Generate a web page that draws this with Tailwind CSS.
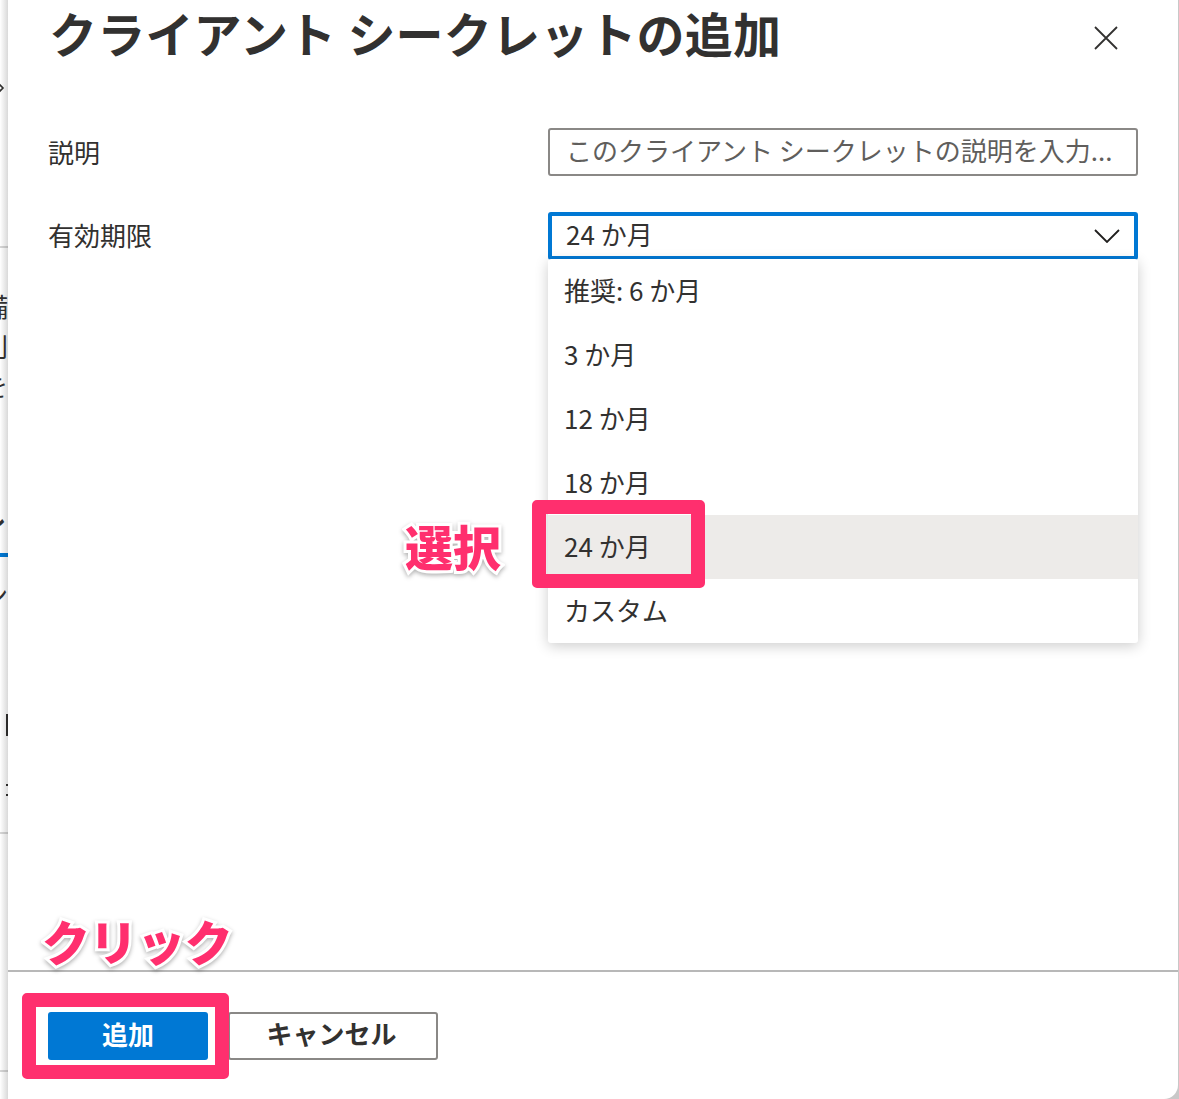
<!DOCTYPE html>
<html lang="ja">
<head>
<meta charset="utf-8">
<script src="https://cdn.jsdelivr.net/npm/@tailwindcss/browser@4"></script>
</head>
<body class="bg-white">
<div class="relative w-[1179px] h-[1099px] overflow-hidden flex bg-[#c8c8c8] text-[#323130] font-['Noto_Sans_CJK_JP','Noto_Sans',sans-serif]">
  <!-- sliver of the page behind the panel -->
  <div class="relative w-[8px] shrink-0 overflow-hidden bg-white">
    <svg class="absolute left-0 top-[82px]" width="8" height="12" viewBox="0 0 8 12" fill="none" stroke="#323130" stroke-width="1.6"><path d="M-1 2 3 6-1 10"/></svg>
    <div class="absolute left-0 top-[246px] w-full h-[2px] bg-[#d6d6d6]"></div>
    <span class="absolute left-[-18px] top-[290px] text-[26px] leading-[32px]">備</span>
    <span class="absolute left-[-18px] top-[330px] text-[26px] leading-[32px]">別</span>
    <span class="absolute left-[-18px] top-[370px] text-[26px] leading-[32px]">を</span>
    <span class="absolute left-[-20px] top-[504px] text-[26px] leading-[32px] font-bold">レ</span>
    <div class="absolute left-0 top-[553px] w-full h-[4px] bg-[#0078d4]"></div>
    <span class="absolute left-[-18px] top-[578px] text-[26px] leading-[32px]">ン</span>
    <div class="absolute left-[6px] top-[714px] w-[2px] h-[22px] bg-[#323130]"></div>
    <div class="absolute left-[6px] top-[784px] w-[2px] h-[2px] bg-[#323130]"></div>
    <div class="absolute left-[6px] top-[794px] w-[2px] h-[2px] bg-[#323130]"></div>
    <div class="absolute left-0 top-[832px] w-full h-[2px] bg-[#d6d6d6]"></div>
    <div class="absolute left-0 top-[1070px] w-full h-[2px] bg-[#d6d6d6]"></div>
    <div class="absolute inset-0 bg-gradient-to-r from-black/0 to-black/15"></div>
  </div>

  <!-- panel -->
  <div class="flex-1 mr-[1px] bg-white rounded-br-[14px] flex flex-col">
    <div class="flex items-start justify-between h-[128px] pl-[41px] pr-[60px]">
      <h1 class="mt-[-4px] text-[48px] leading-[72px] font-bold tracking-[0.2px] whitespace-pre">クライアント シークレットの追加</h1>
      <svg class="mt-[26px]" width="24" height="24" viewBox="0 0 24 24" fill="none" stroke="#323130" stroke-width="1.8"><path d="M1 1 23 23M23 1 1 23"/></svg>
    </div>

    <div class="flex-1 pl-[40px] pr-[40px] flex flex-col gap-[36px]">
      <div class="flex items-center h-[48px]">
        <label class="w-[500px] text-[26px] leading-[48px]">説明</label>
        <div class="w-[590px] h-[48px] border-2 border-[#8a8886] rounded-[3px] pl-[16px] pr-[20px] pb-[6px] flex items-center text-[26px] text-[#605e5c] whitespace-nowrap overflow-hidden">このクライアント シークレットの説明を入力...</div>
      </div>
      <div class="flex items-center h-[48px]">
        <label class="w-[500px] text-[26px] leading-[48px] pb-[2px]">有効期限</label>
        <div class="relative w-[590px] h-[48px]">
          <div class="h-full border-4 border-[#0078d4] rounded-[3px] pl-[14px] pr-[14px] flex items-center justify-between text-[26px]">
            <span class="pb-[6px]">24 か月</span>
            <svg width="26" height="14" viewBox="0 0 26 14" fill="none" stroke="#201f1e" stroke-width="1.8"><path d="M1 1 13 13 25 1"/></svg>
          </div>
          <ul class="absolute left-0 top-[47px] w-full bg-white rounded-[3px] shadow-[0_3px_14px_rgba(0,0,0,0.2)] text-[26px]">
            <li class="h-[64px] pl-[16px] pb-[4px] flex items-center">推奨: 6 か月</li>
            <li class="h-[64px] pl-[16px] pb-[4px] flex items-center">3 か月</li>
            <li class="h-[64px] pl-[16px] pb-[4px] flex items-center">12 か月</li>
            <li class="h-[64px] pl-[16px] pb-[4px] flex items-center">18 か月</li>
            <li class="h-[64px] pl-[16px] pb-[4px] flex items-center bg-[#edebe9]">24 か月</li>
            <li class="h-[64px] pl-[16px] pb-[4px] flex items-center">カスタム</li>
          </ul>
        </div>
      </div>
    </div>

    <div class="h-[129px] border-t-2 border-[#b8b8b8] pl-[40px] pt-[40px] flex gap-[20px] items-start">
      <button class="w-[160px] h-[48px] rounded-[3px] bg-[#0078d4] text-white text-[26px] font-bold pb-[4px] leading-[44px]">追加</button>
      <button class="w-[210px] h-[48px] rounded-[3px] border-2 border-[#8a8886] bg-white text-[26px] font-bold pb-[6px] pr-[3px] leading-[38px]">キャンセル</button>
    </div>
  </div>

  <!-- annotations -->
  <div class="absolute left-[532px] top-[500px] w-[173px] h-[88px] border-[14px] border-[#ff2f6e] rounded-[5px]"></div>
  <div class="absolute left-[22px] top-[993px] w-[207px] h-[86px] border-[14px] border-[#ff2f6e] rounded-[5px]"></div>
  <span class="absolute left-[405px] top-[509px] text-[48px] leading-[72px] font-black text-[#ff2f6e] [-webkit-text-stroke:6px_white] [paint-order:stroke_fill] drop-shadow-[0_2px_2px_rgba(0,0,0,0.3)]">選択</span>
  <span class="absolute left-[42px] top-[904px] text-[48px] leading-[72px] font-black tracking-[-0.4px] text-[#ff2f6e] [-webkit-text-stroke:6px_white] [paint-order:stroke_fill] drop-shadow-[0_2px_2px_rgba(0,0,0,0.3)]">クリック</span>
</div>
</body>
</html>
